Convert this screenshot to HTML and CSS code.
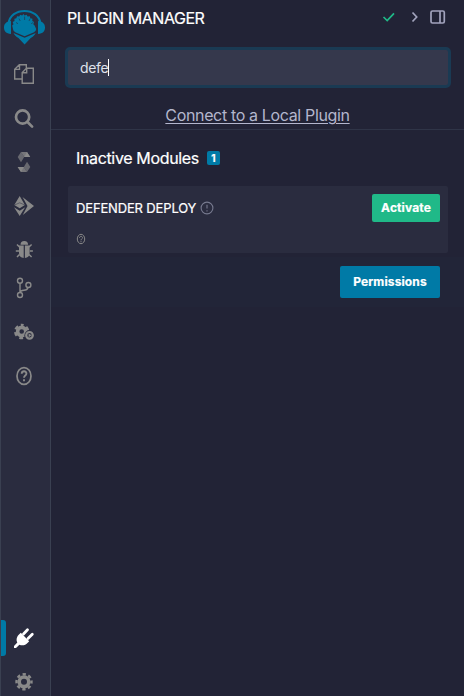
FILE: index.html
```html
<!DOCTYPE html>
<html lang="en">
<head>
<meta charset="utf-8">
<title>Plugin Manager</title>
<link rel="stylesheet" href="styles.css">
</head>
<body>
<div class="app">
  <nav class="rail">
    <a class="logo"><svg width="48" height="52" viewBox="0 0 48 52">
      <path fill="none" stroke="#007aa6" stroke-width="2" d="M8.500 24C10 6.500 39 6.500 40.500 24"/>
      <path fill="#007aa6" d="M11 21v13C6 33.500 4 31 4 27.500S6 21.500 11 21zM38 21v13c5-.5 7-3 7-6.500s-2-6-7-6.500z"/>
      <path fill="#007aa6" d="M13 29l-.8-3.500 1.300-1.300-.8-2.200 1.800-1-.1-2.200 2-.5.600-2 2.200.3 1-1.900 2 .8 1.200-1.500 1.200 1.500 2-.8 1 1.900 2.200-.3.600 2 2 .5-.1 2.200 1.800 1-.8 2.200 1.300 1.300L36.200 29c-.3 1.500-1 2.500-2.200 3.200l-9.400 4-9.400-4C14 31.500 13.300 30.500 13 29z"/>
      <path fill="#007aa6" d="M13.500 33l11.100 4.800L35.700 33c-1 2-2.500 3.600-5 5l-6.100 6.600-6.100-6.600c-2.500-1.400-4-3-5-5z"/>
      <path fill="none" stroke="#2a2c3f" stroke-width=".6" d="M19 18.500l1.200 2.500m4.400-4.500v3.500m5.600-1.500L29 21M16 22.500l2 1.200m15.200-1.200l-2 1.200"/>
    </svg></a>
    <a class="item"><svg class="icon line" viewBox="0 0 24 24"><path d="M9.500 17H2.700V7.200l4.600-4.500h7v3M7.500 2.700v4.700H2.700M14.500 6.200h6.800v15.100H10.200V10.500zM14.700 6.200v4.600h-4.500"/></svg></a>
    <a class="item"><svg class="icon search" viewBox="0 0 24 24"><circle cx="10.600" cy="11" r="6.600"/><path d="M15.500 16l4.600 4.600"/></svg></a>
    <a class="item"><svg class="icon" viewBox="0 0 24 24"><path opacity=".8" d="M9 2h6l3.200 5h-6z"/><path opacity=".65" d="M9 2l3.200 5L9 12.300 5.700 7z"/><path d="M12.200 7h6L15 2z"/><path opacity=".8" d="M15 22H9l-3.300-5h6.100z"/><path opacity=".65" d="M15 22l-3.200-5 3.200-5.200 3.300 5.200z"/><path d="M11.800 17H5.700L9 22z"/></svg></a>
    <a class="item"><svg class="icon" viewBox="0 0 24 24"><path d="M7.700 2l5.200 9-5.200 3.300L2.300 11zM2 13.200l5.700 3.500 5.500-3.500L7.700 22zM10.500 3L22 12 10.800 21l4.700-9z"/><path fill="none" stroke="#2a2c3f" stroke-width=".5" d="M2.500 11l5.200-2.200 5.200 2.200"/></svg></a>
    <a class="item"><svg class="icon" viewBox="0 0 24 24"><path d="M8.500 6.700a3.800 3.800 0 0 1 7.600 0zM7 7.600h4.700V20C8.500 19.700 7 18 7 15zM12.900 7.600h4.700V15c0 3-1.500 4.700-4.700 5z"/><path fill="none" stroke="#898989" stroke-width="1.500" d="M7.500 9L5 6.500M17 9l2.600-2.500M7 13H3.800m14 0h3.100M7.500 16.500L5 19m12-2.500l2.600 2.500"/></svg></a>
    <a class="item git"><svg class="icon line" viewBox="0 0 24 24"><circle cx="8" cy="4.700" r="2.500"/><circle cx="8" cy="19" r="2.500"/><circle cx="16.400" cy="9" r="2.500"/><path d="M8 7.200v9.300M16 11.500c-.6 2-2 2.700-4 2.700-2.500 0-3.700.6-4 2.400"/></svg></a>
    <a class="item"><svg class="icon" viewBox="0 0 24 24"><circle cx="9.700" cy="11.500" r="4.100" fill="none" stroke="#898989" stroke-width="3.600"/><circle cx="9.700" cy="11.500" r="6.400" fill="none" stroke="#898989" stroke-width="2.600" stroke-dasharray="3.800 2.900" stroke-dashoffset="1.900" transform="rotate(-90 9.700 11.500)"/><circle cx="17.500" cy="15.300" r="5.100" fill="#2a2c3f"/><circle cx="17.500" cy="15.300" r="3.300" fill="none" stroke="#898989" stroke-width="2.200"/><path d="M16.600 13.400l3 1.900-3 1.900z"/></svg></a>
    <a class="item"><svg class="icon help" viewBox="0 0 24 24"><ellipse cx="12" cy="12" rx="7" ry="8.400"/><path stroke-width="1.900" d="M9.700 9.700c.2-3.400 4.900-3 4.700 0-.1 1.800-2.400 1.900-2.400 4M12 15.200v2"/></svg></a>
    <a class="item active"><svg class="icon" viewBox="0 0 24 24"><path d="M7.500 8l1.300-1.200 8.400 8.400L16 16.500c-2.500 3-6 3.500-8.600 2.200L4 22H2v-2l3.300-3.400C4 14 4.500 10.500 7.500 8z"/><path fill="none" stroke="#fff" stroke-width="2.800" stroke-linecap="round" d="M11.500 8l4-4.200M16 12.500l4.300-4.200"/></svg></a>
    <a class="item last"><svg class="icon" viewBox="0 0 24 24"><circle cx="12" cy="11.800" r="4.800" fill="none" stroke="#898989" stroke-width="3.600"/><circle cx="12" cy="11.800" r="7.500" fill="none" stroke="#898989" stroke-width="2.400" stroke-dasharray="3.300 2.590" stroke-dashoffset="1.650"/></svg></a>
  </nav>

  <main class="panel">
    <header class="head">
      <h1>PLUGIN MANAGER</h1>
      <svg class="actions" width="66" height="18" viewBox="0 0 66 18"><path stroke="#20b988" d="M1.500 9l3.700 3.500L12 5.300"/><path d="M30.500 4.500L34.700 9l-4.200 4.500"/><rect x="49" y="3" width="13.300" height="12" rx="1.500"/><path d="M58 3v12"/></svg>
    </header>
    <div class="search-box"><span class="query">defe</span><span class="caret"></span></div>
    <div class="local"><a>Connect to a Local Plugin</a></div>
    <section class="modules">
      <h2><span>Inactive Modules</span><b class="badge">1</b></h2>
      <article class="card">
        <div class="card-top">
          <h3>DEFENDER DEPLOY</h3>
          <svg class="info" width="14" height="14" viewBox="0 0 14 14"><circle cx="7" cy="7" r="5.900"/><path d="M7 3.800v3.800M7 9.200v1.200"/></svg>
          <button class="activate">Activate</button>
        </div>
        <svg class="doc" width="10" height="12" viewBox="0 0 10 12"><ellipse cx="5" cy="6" rx="3.700" ry="4.700"/><path d="M3.500 4.800c.1-2 3.100-1.800 3 0C6.400 6 5 6 5 7.300M5 8.200v1"/></svg>
      </article>
    </section>
    <footer class="foot"><button class="permissions">Permissions</button></footer>
  </main>
</div>
</body>
</html>
```
FILE: styles.css
```css
* { box-sizing: border-box; }
body { margin: 0; background: #222336; font-family: Inter, "Liberation Sans", sans-serif; color: #fff; }
.app { display: flex; height: 696px; overflow: hidden; }
.rail { width: 51px; height: 696px; display: flex; flex-direction: column; background: #2a2c3f; border-left: 1px solid #3a4051; border-right: 1px solid #3a4051; }
.logo { height: 52px; flex: none; margin-left: -1px; }
.logo svg { display: block; }
.item { height: 44px; flex: none; display: flex; align-items: center; padding-left: 11px; }
.git { margin-top: -6px; }
.active { margin-top: auto; position: relative; }
.active::before { content: ""; position: absolute; left: 0; top: 4px; width: 5px; height: 36px; background: #007aa6; border-radius: 0 3px 3px 0; }
.last { margin-bottom: -8px; }
.icon { width: 24px; height: 24px; fill: #898989; }
.active .icon { fill: #fff; }
.line { fill: none; stroke: #898989; stroke-width: 1.4; }
.search { fill: none; stroke: #898989; stroke-width: 2.7; stroke-linecap: round; }
.help { fill: none; stroke: #898989; stroke-width: 1.7; }
.panel { flex: 1; min-width: 0; }
.head { height: 48px; display: flex; align-items: flex-start; justify-content: space-between; padding: 8px 16px 0 16px; }
h1, h2, h3 { margin: 0; font-weight: 400; white-space: nowrap; }
h1 { font-size: 16px; line-height: 20px; letter-spacing: -.46px; -webkit-text-stroke: .2px #fff; }
.actions { fill: none; stroke: #a2a3bd; stroke-width: 1.7; }
.search-box { height: 41px; margin: -1px 13px 0 14px; padding: 0 12px; display: flex; align-items: center; background: #35384c; border: 3px solid #1a3a53; border-radius: 5px; font-size: 14px; letter-spacing: -.35px; color: #dfe1ea; }
.caret { width: 1px; height: 17px; background: #fff; }
.local { height: 42px; padding-top: 17px; border-bottom: 1px solid #2f3447; text-align: center; font-size: 16px; line-height: 20px; letter-spacing: -.35px; color: #b4b6cd; white-space: nowrap; }
.local a { text-decoration: underline; text-underline-offset: 2px; text-decoration-thickness: 1px; }
.modules { height: 127px; padding: 18px 16px 0 17px; }
h2 { display: flex; align-items: center; height: 20px; padding-left: 8px; font-size: 16px; line-height: 20px; letter-spacing: -.35px; -webkit-text-stroke: .2px #fff; }
.badge { width: 13px; height: 14px; margin-left: 8px; background: #007aa6; border-radius: 2px; font-size: 10px; line-height: 14px; letter-spacing: 0; text-align: center; }
.card { height: 67px; margin-top: 18px; padding: 8px 8px 0; background: #2a2c3f; border-radius: 2px; }
.card-top { display: flex; align-items: center; height: 28px; }
h3 { font-size: 13px; line-height: 28px; letter-spacing: -.15px; -webkit-text-stroke: .2px #fff; }
.info { margin-left: 4px; fill: none; stroke: #777a8f; stroke-width: 1.1; }
button { border: 0; border-radius: 2px; padding: 0; color: #fff; font: 700 12px/16px Inter, sans-serif; letter-spacing: .12px; -webkit-text-stroke: .2px #fff; }
.activate { width: 68px; height: 28px; margin-left: auto; background: #20b988; }
.doc { display: block; margin-top: 11px; fill: none; stroke: #898989; stroke-width: 1; }
.foot { height: 50px; padding: 9px 24px 0 0; display: flex; justify-content: flex-end; background: #222538; }
.permissions { width: 100px; height: 32px; background: #007aa6; }
```
